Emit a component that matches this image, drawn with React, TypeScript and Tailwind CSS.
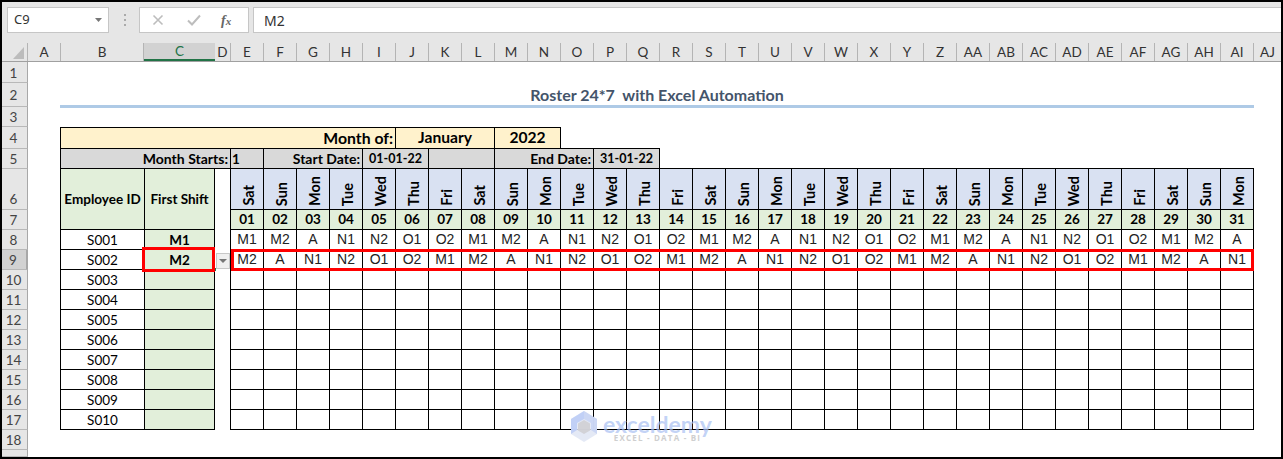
const COLS = ["E","F","G","H","I","J","K","L","M","N","O","P","Q","R","S","T","U","V","W","X","Y","Z","AA","AB","AC","AD","AE","AF","AG","AH","AI"];
const WEEK = ["Sat","Sun","Mon","Tue","Wed","Thu","Fri"];
const SHIFTS = ["M1","M2","A","N1","N2","O1","O2"];
const DAYS = Array.from({ length: 31 }, (_, i) => i);

function RowHead({ n, active, align = "items-center pt-[2px]" }: { n: number; active?: boolean; align?: string }) {
  return (
    <div
      className={`flex justify-center overflow-hidden border-b border-r border-b-[#b8b8b8] border-r-[#a8a8a8] pr-[2px] font-[Lato,sans-serif] text-[13.5px] font-normal leading-[19px] text-[#444] ${align} ${active ? "border-r-2 border-r-[#217346] bg-[#d2d2d2]" : "bg-[#e6e6e6]"}`}
    >
      {n}
    </div>
  );
}

function ColHead({ label, w, active }: { label: string; w: string; active?: boolean }) {
  return (
    <div
      className={`flex shrink-0 items-center justify-center ${w} ${active ? "border-b-2 border-[#217346] bg-[#d2d2d2] text-[#217346]" : "border-r border-[#b4b4b4] text-[#333]"}`}
    >
      {label}
    </div>
  );
}

function FormulaBar() {
  return (
    <div className="flex h-[41px] bg-[#e6e6e6] pb-[10px] pt-[5px] font-['Noto_Sans',sans-serif] text-[13px] text-[#333]">
      <div className="ml-[5px] flex w-[102px] items-center justify-between border border-[#c6c6c6] bg-white pl-[6px] pr-[6px]">
        <span>C9</span>
        <svg width="7" height="4" viewBox="0 0 7 4"><path d="M0 0h7L3.5 4z" fill="#777" /></svg>
      </div>
      <div className="ml-[14px] flex w-[4px] flex-col items-center justify-center gap-[3px]">
        <span className="h-[2px] w-[2px] bg-[#aaa]" />
        <span className="h-[2px] w-[2px] bg-[#aaa]" />
        <span className="h-[2px] w-[2px] bg-[#aaa]" />
      </div>
      <div className="ml-[12px] flex w-[110px] items-center border border-[#c6c6c6] bg-white pl-[12px]">
        <svg width="12" height="12" viewBox="0 0 12 12"><path d="M1.5 1.5l9 9M10.5 1.5l-9 9" stroke="#bdbdbd" strokeWidth="1.6" fill="none" /></svg>
        <svg className="ml-[23px]" width="14" height="12" viewBox="0 0 14 12"><path d="M1 6.5l4 4L13 1.5" stroke="#bdbdbd" strokeWidth="2" fill="none" /></svg>
        <span className="ml-[20px] font-['Liberation_Serif',serif] text-[14px] font-bold italic text-[#666]">
          f<span className="text-[11px]">x</span>
        </span>
      </div>
      <div className="ml-[4px] flex flex-1 items-center border-y border-l border-[#c6c6c6] bg-white pl-[10px] text-[14px]">M2</div>
    </div>
  );
}

function ColumnHeaders() {
  return (
    <div className="flex h-[19px] border-b border-[#a0a0a0] bg-[#e6e6e6] font-[Lato,sans-serif] text-[13.5px]">
      <div className="flex w-[26px] shrink-0 items-end justify-end border-r border-[#b4b4b4] pb-[2px] pr-[3px]">
        <svg width="11" height="12" viewBox="0 0 11 12"><path d="M11 0v12H0z" fill="#bcbcbc" /></svg>
      </div>
      <ColHead label="A" w="w-[33px]" />
      <ColHead label="B" w="w-[83px]" />
      <ColHead label="C" w="w-[71px]" active />
      <ColHead label="D" w="w-[16px]" />
      {COLS.map((c) => (
        <ColHead key={c} label={c} w="w-[33px]" />
      ))}
      <div className="flex flex-1 items-center justify-center text-[#333]">AJ</div>
    </div>
  );
}

function Watermark() {
  return (
    <div className="pointer-events-none absolute left-[568px] top-[349px] flex">
      <svg width="28" height="32" viewBox="0 0 28 32">
        <path d="M14 0L27 8v15L14 31 1 23V8z" fill="#dfe5f3" opacity="0.85" />
        <path d="M14 0L1 8v15l6-4v-7l7-4z" fill="#bccdf6" opacity="0.9" />
        <path d="M14 0l13 8v15l-6-4v-7l-7-4z" fill="#c9d5f4" opacity="0.9" />
        <path d="M14 9l6 3.5v7L14 23l-6-3.5v-7z" fill="#cfcfd4" opacity="0.9" />
      </svg>
      <div className="ml-[5px] flex flex-col items-center pt-[5px]">
        <span className="font-[Lato,sans-serif] text-[23px] font-bold leading-[17px] text-[#a9bff3]/70">exceldemy</span>
        <span className="mt-[1px] font-['Open_Sans',sans-serif] text-[8px] font-bold leading-[8px] tracking-[1.2px] text-[#cfcfcf]">EXCEL - DATA - BI</span>
      </div>
    </div>
  );
}

const label = "flex items-center justify-end pr-[2px] border-b border-black bg-[#d9d9d9] text-[14px]";
const center = "flex items-center justify-center";
const ids = ["S001","S002","S003","S004","S005","S006","S007","S008","S009","S010"];

function Sheet() {
  return (
    <div className="relative grid flex-1 grid-cols-[26px_32px_85px_70px_15px_34px_repeat(30,33px)_1fr] grid-rows-[21px_24px_20px_22px_20px_41px_repeat(12,20px)_7px] bg-white font-[Lato,sans-serif] text-[13.5px] font-bold text-black">
      <RowHead n={1} />
      <div className="col-span-36" />

      <RowHead n={2} />
      <div />
      <div className="col-span-34 flex items-center justify-center border-b-2 border-[#aecae6] pt-[1px] text-[16px] text-[#44546a]">
        <span className="whitespace-pre">Roster 24*7  with Excel Automation</span>
      </div>
      <div />

      <RowHead n={3} />
      <div />
      <div className="col-span-34 border-t border-[#aecae6]" />
      <div />

      <RowHead n={4} />
      <div />
      <div className="col-span-8 flex items-center justify-end border border-black bg-[#fff2cc] pr-[2px] text-[15.8px]">Month of:</div>
      <div className={`col-span-3 ${center} border-y border-r border-black bg-[#fff2cc] text-[15.6px]`}>January</div>
      <div className={`col-span-2 ${center} border-y border-r border-black bg-[#fff2cc] text-[15.6px]`}>2022</div>
      <div className="col-span-3 border-b border-black" />
      <div className="col-span-19" />

      <RowHead n={5} />
      <div />
      <div className={`col-span-3 border-l border-black ${label}`}>Month Starts:</div>
      <div className="flex items-center border-x border-b border-black bg-[#d9d9d9] pl-[1px] pt-[2px]">1</div>
      <div className={`col-span-3 border-r ${label}`}>Start Date:</div>
      <div className={`col-span-2 ${center} border-b border-r border-black bg-[#d9d9d9] pt-[2px] text-[12.5px]`}>01-01-22</div>
      <div className="col-span-2 border-b border-r border-black bg-[#d9d9d9]" />
      <div className={`col-span-3 border-r ${label}`}>End Date:</div>
      <div className={`col-span-2 ${center} border-b border-r border-black bg-[#d9d9d9] pt-[2px] text-[12.5px]`}>31-01-22</div>
      <div className="col-span-18 border-b border-black" />
      <div />

      <RowHead n={6} align="items-end" />
      <div />
      <div className={`row-span-2 ${center} border-x border-b border-black bg-[#e2efda]`}>Employee ID</div>
      <div className={`row-span-2 ${center} border-b border-r border-black bg-[#e2efda]`}>First Shift</div>
      <div />
      {DAYS.map((i) => (
        <div
          key={i}
          className={`flex items-end justify-center border-b border-r border-black bg-[#d9e1f2] pb-[3px] pl-[5px] text-[14.5px] ${i === 0 ? "border-l" : ""}`}
        >
          <span className="rotate-180 leading-none [writing-mode:vertical-rl]">{WEEK[i % 7]}</span>
        </div>
      ))}
      <div />

      <RowHead n={7} />
      <div />
      <div />
      {DAYS.map((i) => (
        <div key={i} className={`${center} border-b border-r border-black bg-[#e2efda] ${i === 0 ? "border-l" : ""}`}>
          {String(i + 1).padStart(2, "0")}
        </div>
      ))}
      <div />

      {ids.map((id, r) => (
        <div key={id} className="contents">
          <RowHead n={r + 8} active={r === 1} />
          <div />
          <div className={`${center} border-x border-b border-black pt-[2px] font-normal`}>{id}</div>
          <div className={`${center} border-b border-r border-black bg-[#e2efda] pt-[1px] text-[13.5px]`}>{r === 0 ? "M1" : r === 1 ? "M2" : ""}</div>
          <div />
          {DAYS.map((i) => (
            <div
              key={i}
              className={`${center} border-b border-r border-black font-['Liberation_Sans',sans-serif] text-[14px] font-normal text-[#222] ${i === 0 ? "border-l" : ""}`}
            >
              {r < 2 ? SHIFTS[(i + r) % 7] : ""}
            </div>
          ))}
          <div />
        </div>
      ))}

      <RowHead n={18} />
      <div className="col-span-36" />
      <RowHead n={19} align="items-start pt-[2px]" />
      <div className="col-span-36" />

      <div className="absolute left-[214px] top-[191px] flex h-[16px] w-[14px] items-center justify-center border border-[#c8c8c8] bg-[#f0f0f0]">
        <svg width="8" height="4" viewBox="0 0 8 4"><path d="M0 0h8L4 4z" fill="#777" /></svg>
      </div>
      <div className="absolute left-[212px] top-[206px] h-[3px] w-[2px] bg-[#217346]" />
      <div className="absolute left-[140px] top-[185px] h-[25px] w-[73px] border-[3px] border-[#ff0000]" />
      <div className="absolute left-[229px] top-[187px] h-[22px] w-[1023px] border-[3px] border-[#ff0000]" />
      <Watermark />
    </div>
  );
}

export default function App() {
  return (
    <div className="h-[459px] w-[1283px] overflow-hidden bg-black p-[2px]">
      <div className="flex h-full flex-col">
        <FormulaBar />
        <ColumnHeaders />
        <Sheet />
      </div>
    </div>
  );
}
